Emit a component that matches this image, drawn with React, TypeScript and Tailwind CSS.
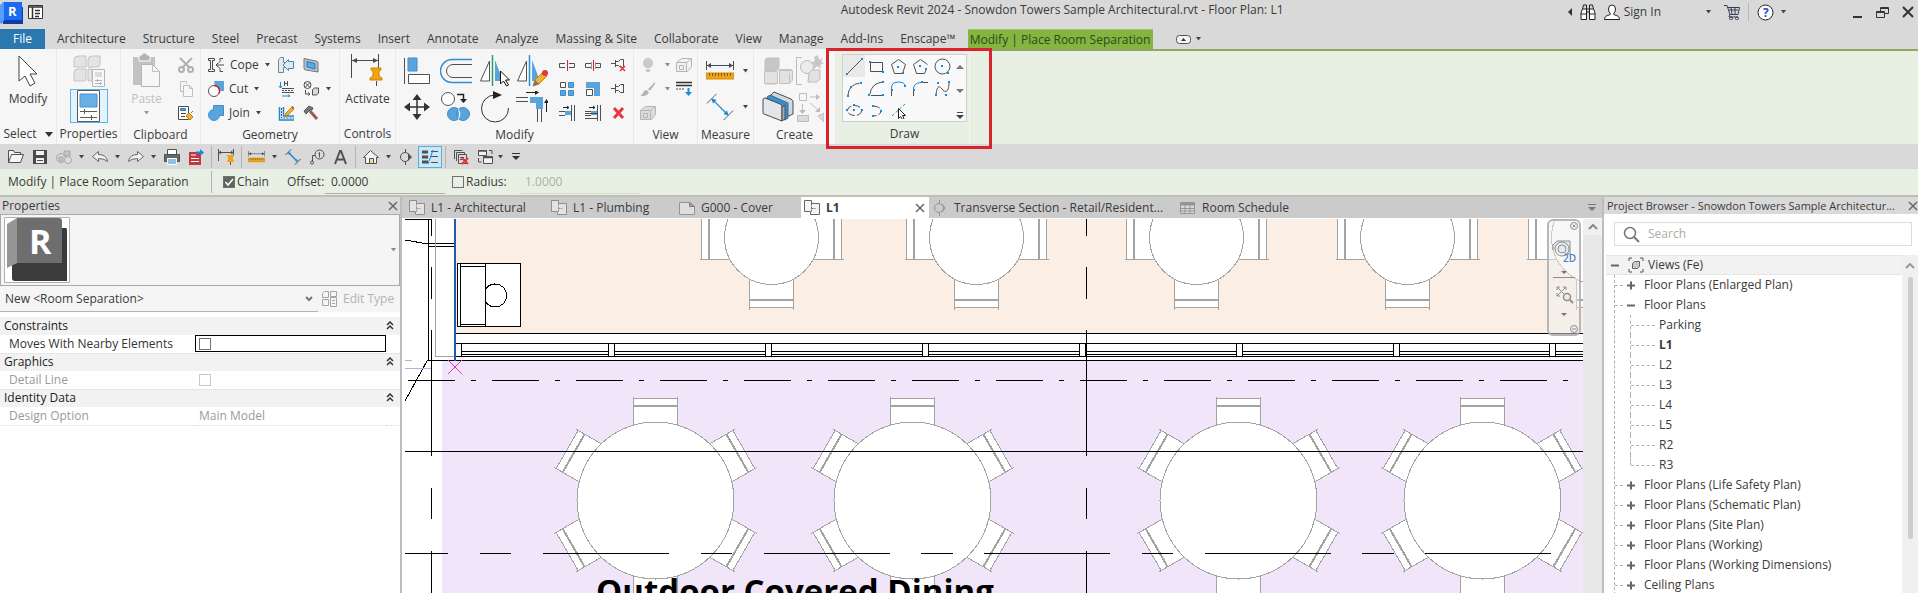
import type { ReactNode } from "react";

const BLUE = "#5aa4dc";

type IconProps = { w?: number; h?: number; stroke?: string; sw?: number; children: ReactNode };

function Icon({ w = 16, h = 16, stroke = "#505050", sw = 1, children }: IconProps) {
  return (
    <svg width={w} height={h} viewBox={`0 0 ${w} ${h}`} fill="none" stroke={stroke} strokeWidth={sw} className="block shrink-0" aria-hidden="true">
      {children}
    </svg>
  );
}

function Tool({ label, className = "", children }: { label: string; className?: string; children: ReactNode }) {
  return (
    <button type="button" aria-label={label} className={`flex items-center justify-center ${className}`}>
      {children}
    </button>
  );
}

function Caret({ color = "#444" }: { color?: string }) {
  return (
    <svg width="7" height="4" viewBox="0 0 7 4" className="block shrink-0" aria-hidden="true">
      <path d="M1 0h5L3.500 3.500z" fill={color} />
    </svg>
  );
}

function Panel({ title, className = "", children }: { title: ReactNode; className?: string; children: ReactNode }) {
  return (
    <section className={`flex shrink-0 flex-col border-r border-[#e9e9e9] ${className}`}>
      <div className="flex flex-1 justify-center pt-1">{children}</div>
      <div className="flex h-5 items-center justify-center gap-2 whitespace-nowrap">{title}</div>
    </section>
  );
}

/* ── Ribbon icons ── */

const ArrowIcon = () => (
  <Icon w={20} h={32} stroke="#444">
    <path d="M1 1v25l6-5 5 10 5-3-5-9h7z" fill="#fff" />
  </Icon>
);

const TypePropsIcon = () => (
  <Icon w={34} h={34} stroke="#c4c4c4">
    <path d="M2 6q0-4 4-4h8v11H2zM16 6q0-4 4-4h8v8q0 3-3 3h-9zM2 19q0-4 4-4h8v9q0 3-3 3H2zM16 15h4v12h-4z" fill="#e4e4e4" />
    <path d="M20.500 15.500h12v17h-12z" fill="#f8f8f8" stroke="#b4b4b4" />
    <path d="M23 18h7v5h-7z" fill="#dadada" stroke="none" />
    <path d="M23 26.500h7M23 29.500h7M25.500 25v3M28.500 28v3" stroke="#b4b4b4" />
  </Icon>
);

const PropsIcon = () => (
  <Icon w={26} h={32} stroke="#5a5a5a">
    <path d="M1.500 .5h22v31h-22z" fill="#fff" />
    <path d="M4 4h17v13H4z" fill="#69b0e6" stroke="#4793cb" />
    <path d="M4 21.500h17M4 27.500h17M8.500 19v5M15.500 25v5" />
  </Icon>
);

const PasteIcon = () => (
  <Icon w={27} h={34} stroke="#c0c0c0">
    <path d="M0 4h22v28H0z" fill="#c2c2c2" stroke="none" />
    <path d="M6 2h3V0h5v2h3v6H6z" fill="#b3b3b3" stroke="#fff" />
    <path d="M8.500 11.500h11l7 7v15h-18z" fill="#f7f7f7" stroke="#b5b5b5" />
    <path d="M19.500 11.500v7h7" />
  </Icon>
);

const ScissorsIcon = () => (
  <Icon stroke="#b0b0b0" sw={2}>
    <path d="M2 1l10 10M14 1L4 11" />
    <circle cx="3.500" cy="12.500" r="2.500" />
    <circle cx="12.500" cy="12.500" r="2.500" />
  </Icon>
);

const CopyIcon = () => (
  <Icon stroke="#c0c0c0">
    <path d="M2.500 .5h6v2M2.500 .5v10h3" />
    <path d="M5.500 4.500h6l3 3v8h-9z" fill="#f7f7f7" />
    <path d="M11.500 4.500v3h3" />
  </Icon>
);

const MatchIcon = () => (
  <Icon stroke="#4a4a4a">
    <path d="M.5 1.500h10v13H.5z" fill="#fff" />
    <path d="M2.500 3.500h5v2h-5z" fill={BLUE} stroke="#2b79b8" />
    <path d="M3 8.500h5M3 11.500h4" />
    <path d="M8 11l3-3 4 4-3 3z" fill="#f2b233" stroke="#b88214" />
    <path d="M13 8l2-2" stroke="#777" />
  </Icon>
);

const CopeIcon = () => (
  <Icon w={17} stroke="#4a4a4a">
    <path d="M.5 1.500h6v2h-2v9h2v2h-6v-2h2v-9h-2z" />
    <path d="M15 1.500h-3v3l-2 2M15 14.500h-3v-3l-2-2M16 8H8l2-2M8 8l2 2" />
  </Icon>
);

const CutIcon = () => (
  <Icon>
    <path d="M6 0h10v10H8z" fill={BLUE} stroke="none" />
    <circle cx="6" cy="10" r="5.500" fill="#fff" stroke="#555" />
    <path d="M6 4.500a5.500 5.500 0 0 1 5 8" stroke="#d8232a" strokeWidth="1.500" />
  </Icon>
);

const JoinIcon = () => (
  <Icon>
    <path d="M5.500 .5h10v10h-4a5.500 5.500 0 1 1-6-6z" fill={BLUE} stroke="#3f8dc9" />
  </Icon>
);

const CopeOutIcon = () => (
  <Icon>
    <path d="M.5 2.500l2-2h3v5H9v5H5.500v5h-5z" fill="#e4ebef" stroke="#6e8797" />
    <path d="M15.500 4.500h-5v-2L5 8l5.500 5.500v-2h5z" fill="#d6ebf8" stroke="#4c83a8" />
  </Icon>
);

const WallJoinIcon = () => (
  <Icon>
    <path d="M2.500 1v6M1 5l1.500 2L4 5M4 15h8M10 13.500l2 1.500-2 1.500" stroke="#1a8ad8" />
    <path d="M6.500 0v5M9.500 0v5M6 2.500h4" />
    <path d="M4 7.500h12M4 11.500h12" />
    <path d="M4 9.500h12" strokeDasharray="2 1" />
  </Icon>
);

const EditJoinIcon = () => (
  <Icon>
    <path d="M1.500 2v13H16M5.500 2v9H16" stroke="#1a8ad8" strokeWidth="1.500" />
    <path d="M3.500 3v10H16" strokeDasharray="2 1" />
    <path d="M8 8l6-6 2 2-6 6-3 1z" fill="#f2b233" stroke="#b88214" />
    <path d="M13 2l2-1 1 2-1 1z" fill="#d8443c" stroke="none" />
  </Icon>
);

const PanelFaceIcon = () => (
  <Icon>
    <path d="M1 1.500l12 2.500q2 0 2 2v9L3 13q-2 0-2-2z" fill="#b6c2ca" stroke="#6b7780" />
    <path d="M4 4.500l8 2v5.500l-8-2z" fill="#59a9e2" stroke="#2b79b8" />
  </Icon>
);

const CubeSwapIcon = () => (
  <Icon>
    <circle cx="4.500" cy="4" r="3.500" />
    <path d="M2 1.500l5 5M7 1.500l-5 5M2.500 9v4h4M5 11.500l2 1.500-2 1.500" />
    <path d="M9.500 8.500l2-1.500h4v5l-2 2h-4z" fill="#dadada" />
  </Icon>
);

const HammerIcon = () => (
  <Icon>
    <path d="M1 6l5-5 4 2-1 2-2 0-4 4z" fill="#777" stroke="#555" />
    <path d="M7 6l7 8" stroke="#9a5b55" strokeWidth="3" />
  </Icon>
);

const PinDimIcon = () => (
  <Icon w={34} h={34} stroke="#4a4a4a">
    <path d="M1.500 1v24M28.500 1v14M2 7.500h26" />
    <path d="M2 7.500l5-2.500v5zM28 7.500l-5-2.500v5z" fill="#4a4a4a" stroke="none" />
    <path d="M26.500 28v5" />
    <path d="M21 15h10v2l-2 1v5l3 2v2H20v-2l3-2v-5l-2-1z" fill="#f0a414" stroke="#c98506" />
  </Icon>
);

const AlignIcon = () => (
  <Icon w={32} h={32}>
    <path d="M3.500 3v26" />
    <path d="M7 3h9v13H7z" fill={BLUE} stroke="#3f8dc9" />
    <path d="M7.500 19.500h21v9h-21z" fill="#fff" />
  </Icon>
);

const OffsetIcon = () => (
  <Icon w={32} h={32}>
    <path d="M32 4.500H12a11.500 11.500 0 0 0 0 23h20" stroke="#2e8fd8" strokeWidth="1.500" />
    <path d="M32 9.500H13a6.500 6.500 0 0 0 0 13h19" />
  </Icon>
);

const MirrorPickIcon = () => (
  <Icon w={32} h={32}>
    <path d="M1.500 26h9V6z" fill="#fff" />
    <path d="M13.500 0v31" stroke="#2aa35a" strokeWidth="1.500" />
    <path d="M16 5v21h8z" fill={BLUE} stroke="none" />
    <path d="M21.500 16v13l3-3 3 5 2-1-3-5h4z" fill="#fff" stroke="#111" />
  </Icon>
);

const MirrorDrawIcon = () => (
  <Icon w={32} h={32}>
    <path d="M1.500 26h9V6z" fill="#fff" />
    <path d="M13.500 0v31" stroke="#2e8fd8" strokeWidth="1.500" />
    <path d="M16 5v21h8z" fill={BLUE} stroke="none" />
    <path d="M17 31l2-6 8-8 4 4-8 8z" fill="#f2b233" stroke="#c98506" />
    <path d="M17 31l2-6 4 4z" fill="#777" stroke="none" />
    <circle cx="29" cy="18" r="3" fill="#e2373c" stroke="none" />
  </Icon>
);

const MoveIcon = () => (
  <Icon w={32} h={32}>
    <path d="M16 5v22M5 16h22" stroke="#333" strokeWidth="1.500" />
    <path d="M16 3l4.500 6h-9zM16 29l4.500-6h-9zM3 16l6-4.500v9zM29 16l-6-4.500v9z" fill="#333" stroke="none" />
  </Icon>
);

const CopyShapesIcon = () => (
  <Icon w={32} h={32}>
    <circle cx="8" cy="8" r="6.500" fill="#fff" stroke="#555" />
    <path d="M17 3.500h6.500V11" stroke="#222" strokeWidth="1.500" />
    <path d="M20 8h7l-3.500 4z" fill="#222" stroke="none" />
    <circle cx="14" cy="23" r="6.500" fill={BLUE} stroke="#3f8dc9" />
    <circle cx="23" cy="23" r="6.500" fill={BLUE} stroke="#3f8dc9" />
    <path d="M18.500 18.500q3 4.500 0 9" stroke="#fff" />
  </Icon>
);

const RotateIcon = () => (
  <Icon w={32} h={32} stroke="#333">
    <path d="M19 4H16A13.500 13.500 0 1 0 29.500 17" />
    <path d="M14 0l9 4-9 4z" fill="#222" stroke="none" />
  </Icon>
);

const TrimIcon = () => (
  <Icon w={32} h={32}>
    <path d="M0 6.500h12M0 10.500h12M21.500 18v13M25.500 18v13" />
    <path d="M10 1.500h10M30.500 10v11" stroke="#222" />
    <path d="M19-1l4 2.500-4 2.500zM28 12l2.500-4 2.500 4z" fill="#222" stroke="none" />
    <path d="M14 6h13v12h-7v-6h-6z" fill={BLUE} stroke="none" />
  </Icon>
);

const SplitIcon = ({ gap = false }: { gap?: boolean }) => (
  <Icon>
    <path d="M6 6.500H.5v4H6M10 6.500h5.500v4H10" />
    {gap && <path d="M6.500 5v7M10.500 5v7" stroke="#999" />}
    <path d="M8.500 3v11" stroke="#d8232a" />
  </Icon>
);

const UnpinIcon = () => (
  <Icon>
    <path d="M0 6.500h4M4.500 3v7M4.500 4.500h3l2-2h3v8h-3l-2-2h-3" />
    <path d="M9 9l5 5M14 9l-5 5" stroke="#e8373c" strokeWidth="1.500" />
  </Icon>
);

const PinIcon = () => (
  <Icon>
    <path d="M0 7.500h4M4.500 3v9M4.500 5.500h3l2-2h3v8h-3l-2-2h-3M12.500 3v9" />
  </Icon>
);

const ArrayIcon = () => (
  <Icon>
    <path d="M1.500 1.500h5v5h-5z" fill="#fff" />
    <path d="M9.500 1.500h5v5h-5zM1.500 9.500h5v5h-5zM9.500 9.500h5v5h-5z" fill={BLUE} stroke="#3f8dc9" />
  </Icon>
);

const ScaleIcon = () => (
  <Icon>
    <path d="M1 1h14v14H9V7H1z" fill={BLUE} stroke="none" />
    <path d="M1.500 8.500h6v6h-6z" fill="#fff" />
  </Icon>
);

const TrimOneIcon = ({ many = false }: { many?: boolean }) => (
  <Icon>
    <path d="M12.500 0v16M15.500 0v16M0 6.500h6M0 10.500h6" />
    <path d="M4 2.500h5M8 1l2 1.500L8 4" stroke="#222" />
    <path d="M6 6h6v4H6z" fill={BLUE} stroke="none" />
    {many && <path d="M0 13.500h12M0 8.500h12" />}
  </Icon>
);

const DeleteIcon = () => (
  <Icon stroke="#e8373c" sw={3}>
    <path d="M3 3l9 10M12 3L3 13" />
  </Icon>
);

const BulbIcon = () => (
  <Icon stroke="none">
    <path d="M8 1a5 5 0 0 0-3 9v1h6v-1a5 5 0 0 0-3-9zM6 12h4v3H6z" fill="#c9c9c9" />
  </Icon>
);

const BrushIcon = () => (
  <Icon stroke="none">
    <path d="M15 1L8 8l2 2 5-7zM7 9q-3 0-4 3-1 2-3 2 5 3 9-2z" fill="#b5b5b5" />
  </Icon>
);

const BoxIcon = ({ fill = "#dcdcdc" }: { fill?: string }) => (
  <Icon stroke="#b5b5b5">
    <path d="M.5 5.500l5-4h10v8l-4 5H.5z" fill={fill} />
    <path d="M.5 5.500h10v9M10.500 5.500l5-4M3.500 8.500h4v4h-4z" fill="none" />
  </Icon>
);

const LinesDownIcon = () => (
  <Icon>
    <path d="M0 1.500h16M0 4.500h16" stroke="#333" strokeWidth="1.500" />
    <path d="M0 8h9" strokeDasharray="2 1" />
    <path d="M12.500 7v5" stroke="#1a8ad8" strokeWidth="2" />
    <path d="M9 11h7l-3.500 4z" fill="#1a8ad8" stroke="none" />
  </Icon>
);

const RulerIcon = ({ w = 28, h = 20 }: { w?: number; h?: number }) => (
  <svg width={w} height={h} viewBox="0 0 28 20" fill="none" stroke="#4a4a4a" className="block shrink-0" aria-hidden="true">
    <path d="M.5 0v9M27.500 0v9M1 4.500h26" />
    <path d="M1 4.500l4-2.500v5zM27 4.500l-4-2.500v5z" fill="#4a4a4a" stroke="none" />
    <path d="M0 12h28v6H0z" fill="#f0a414" stroke="#d08c08" />
    <path d="M3.500 12v3M6.500 12v3M9.500 12v3M12.500 12v3M15.500 12v3M18.500 12v3M21.500 12v3M24.500 12v3" stroke="#8a5d00" />
  </svg>
);

const AlignedDimIcon = ({ s = 32 }: { s?: number }) => (
  <svg width={s} height={s} viewBox="0 0 32 32" fill="none" stroke="#4a4a4a" strokeWidth={s < 20 ? 2 : 1} className="block shrink-0" aria-hidden="true">
    <path d="M1 12L12 1M20 31l11-11" />
    <path d="M7 7l17 17" stroke="#1a8ad8" strokeWidth={s < 20 ? 3 : 1.5} />
    <path d="M6 6l6 2-4 4zM26 26l-6-2 4-4z" fill="#1a8ad8" stroke="none" />
  </svg>
);

const CubesIcon = () => (
  <Icon w={30} h={30} stroke="#c2c2c2">
    <path d="M2 5q0-3 3-3h11v9q0 3-3 3v14H2z" fill="#c6c6c6" />
    <path d="M1.500 15.500h13v12h-13zM16.500 14.500h13v10l-3 3h-10z" fill="#e2e2e2" />
    <path d="M14.500 15.500l2-2h12M26.500 17.500v10" />
  </Icon>
);

const GroupIcon = () => (
  <Icon w={28} h={32} stroke="#bcbcbc">
    <path d="M6 2.500H.5v27H6" />
    <circle cx="11" cy="12" r="6.500" fill="#ececec" />
    <path d="M13 18l3-3h8v9l-3 3h-9z" fill="#e2e2e2" />
    <path d="M22 0l1 5 4-2-2 4 3 1-4 2 1 4-4-3-3 3v-5l-4-1 5-2-1-4z" fill="#c6c6c6" stroke="none" />
  </Icon>
);

const WallsIcon = () => (
  <Icon w={32} h={32} stroke="#4a4a4a">
    <path d="M9 4l3-3 17 7q2 1 2 3v12l-4 2L9 17z" fill="#d4d8da" />
    <path d="M5 6l3-2 18 8v15l-3 2L5 20z" fill="#3d8dcc" stroke="#2b6d9f" />
    <path d="M1 9q0-2 2-2l15 6q2 1 2 3v14L2 23q-1 0-1-2z" fill="#e3e6e8" />
    <path d="M20 16l3-2v14l-3 2z" fill="#a6adb1" />
  </Icon>
);

const SimilarIcon = () => (
  <Icon w={28} h={32} stroke="#bcbcbc">
    <path d="M3.500 2.500h7v7h-7zM14 6h8M6.500 13v8M14 12l8 7" />
    <path d="M20 3l4 3-4 3zM3 19l3.500 4 3.500-4zM24 16v5h-5z" fill="#bcbcbc" stroke="none" />
    <path d="M1.500 24.500h11v6h-11zM22 25l6-3v9z" fill="#dadada" />
  </Icon>
);

/* ── Draw gallery ── */

function Dots({ at }: { at: [number, number][] }) {
  return (
    <>
      {at.map(([x, y]) => (
        <rect key={`${x}-${y}`} x={x - 1} y={y - 1} width="2" height="2" fill="#1a8ad8" stroke="none" />
      ))}
    </>
  );
}

const drawTools: { label: string; art: ReactNode }[] = [
  { label: "Line", art: <><path d="M2 15L15 2" /><Dots at={[[1, 16], [16, 1]]} /></> },
  { label: "Rectangle", art: <><path d="M2.500 4.500h12v9h-12z" /><Dots at={[[2, 4], [15, 14]]} /></> },
  { label: "Inscribed Polygon", art: <><path d="M8.500 1.500l7 5-3 9h-8l-3-9z" /><Dots at={[[8, 9], [13, 15]]} /></> },
  { label: "Circumscribed Polygon", art: <><path d="M14 12l-1.500 3.500h-8l-3-9 7-5 7 5" /><Dots at={[[8, 8], [14, 11]]} /></> },
  { label: "Circle", art: <><circle cx="8.500" cy="8.500" r="7.500" /><Dots at={[[8, 8], [14, 15]]} /></> },
  { label: "Start-End-Radius Arc", art: <><path d="M2 15Q3 4 15 3" strokeDasharray="8 2" /><Dots at={[[2, 16], [5, 7], [15, 3]]} /></> },
  { label: "Center-ends Arc", art: <><path d="M2 14Q3 4 14 2M3 15.500h11" /><Dots at={[[1, 15], [15, 2], [15, 15]]} /></> },
  { label: "Tangent End Arc", art: <><path d="M1.500 10v6" /><path d="M1.500 9Q1 2 8 2t7 4" stroke="#1a8ad8" /><Dots at={[[2, 10], [15, 6]]} /></> },
  { label: "Fillet Arc", art: <><path d="M1.500 11v5M10 2.500h6" /><path d="M1.500 10Q1 3 9 2.500" stroke="#1a8ad8" /><Dots at={[[2, 10], [10, 2]]} /></> },
  { label: "Spline", art: <><path d="M2 15C3 6 5 5 8 9s7 4 7-7" /><Dots at={[[2, 15], [4, 3], [12, 15], [15, 2]]} /></> },
  { label: "Ellipse", art: <><ellipse cx="8.500" cy="8.500" rx="7" ry="5" strokeDasharray="7 2" /><Dots at={[[8, 8], [1, 8], [16, 8], [8, 3]]} /></> },
  { label: "Partial Ellipse", art: <><path d="M6 4q7 1 7 5t-7 5" strokeDasharray="6 2" /><Dots at={[[5, 4], [13, 9], [5, 14]]} /></> },
  {
    label: "Pick Lines",
    art: <><path d="M2 14L15 2" stroke="#2aa35a" strokeDasharray="3 2" /><path d="M8.500 6.500v10l2-2 2 3 1.500-1-1.500-3h3z" fill="#fff" stroke="#222" /></>,
  },
];

/* ── Floor plan ── */

function Chair({ reach }: { reach: number }) {
  return (
    <g>
      <path d={`M-22 -${reach - 30}V-${reach - 8}h44v22z`} />
      <path d={`M-22 -${reach - 7}h44v-7h-44zM-22 -${reach}v-2M22 -${reach}v-2`} />
    </g>
  );
}

function DiningTable({ cx, cy, r, reach, angles }: { cx: number; cy: number; r: number; reach: number; angles: number[] }) {
  return (
    <g transform={`translate(${cx} ${cy})`} fill="#fff" stroke="#a3a3a3">
      {angles.map((a) => (
        <g key={a} transform={`rotate(${a})`}>
          <Chair reach={reach} />
        </g>
      ))}
      <circle r={r} />
    </g>
  );
}

const mullions = [455, 608, 765, 922, 1079, 1236, 1393, 1549];
const beamDashes = [[405, 448], [480, 511], [543, 669], [701, 732], [764, 890], [921, 953], [984, 1110], [1142, 1173], [1205, 1331], [1362, 1394], [1425, 1551]];

function FloorPlan() {
  return (
    <svg className="block h-full w-full" role="img" aria-label="Floor plan L1">
      <g transform="translate(-404 -219)" fill="none" stroke="#000" strokeWidth="1" shapeRendering="crispEdges">
        <rect x="455" y="219" width="2400" height="114" fill="#fbefe5" stroke="none" />
        <rect x="442" y="361" width="2400" height="1200" fill="#f1e6f9" stroke="none" />

        {[771.5, 976.5, 1196.5, 1407.5, 1598.5].map((x) => (
          <DiningTable key={x} cx={x} cy={237.5} r={47} reach={70} angles={[90, 180, 270]} />
        ))}
        {[655.5, 912.5, 1238.5, 1482.5].map((x) => (
          <DiningTable key={x} cx={x} cy={500.5} r={78.5} reach={102} angles={[0, 60, 120, 180, 240, 300]} />
        ))}

        {/* curtain wall */}
        <rect x="455" y="334" width="2400" height="26" fill="#fff" stroke="none" />
        <path d="M455 333.500H2800M455 343.500H2800M455 351.500H2800M455 354.500H2800M455 356.500H2800M427 360.500H2800" />
        {mullions.map((x) => (
          <rect key={x} x={x + 0.5} y="343.500" width="6" height="13" fill="#fff" />
        ))}

        {/* left wall */}
        <path d="M405 219.500h26M428.500 219v142M405 240l23 4M428 243.500h26M428 246.500h26M427 361l-22 40" />
        <path d="M435.500 219v137.500h19" stroke="#a3a3a3" />
        <path d="M455 219v142" stroke="#1d5cae" strokeWidth="2" />
        <path d="M405 360.500h7M405 368h26" stroke="#a9b7dc" />
        {[431.5, 1086.5].map((x) => (
          <path key={x} d={`M${x} 219v17M${x} 267v32M${x} 330v126M${x} 488v31M${x} 551v200`} />
        ))}

        {/* washroom fixture */}
        <path d="M457.500 263.500h63v63h-63zM460.500 266.500h25v58h-25zM460.500 263.500v63M485.500 263.500v63" fill="#fff" />
        <path d="M486 288.500a11.500 11.500 0 1 1 0 14" />

        <path d="M408 380.500H1570" strokeDasharray="47 16 5 16" />
        <path d="M405 451.500H2800" />
        {beamDashes.map(([a, b]) => (
          <path key={a} d={`M${a} 553.500H${b}`} />
        ))}
        <path d="M448 360l14 14M462 360l-14 14" stroke="#e02fc8" shapeRendering="auto" />
        <text x="596" y="603" fill="#000" stroke="none" className="font-['Open_Sans',sans-serif] text-[33px] font-bold">Outdoor Covered Dining</text>
      </g>
    </svg>
  );
}

function NavBar() {
  return (
    <div className="absolute top-0 right-[2px] flex h-[117px] w-[34px] flex-col rounded-md border-2 border-[#a8a8a8]/80 bg-[#efefef]/50">
      <svg width="30" height="113" viewBox="0 0 30 113" fill="none" stroke="#8d8d8d" role="img" aria-label="Navigation bar">
        <circle cx="25" cy="5" r="3.500" />
        <path d="M23.500 3.500l3 3M26.500 3.500l-3 3M4 56.500h22M23 108h4" />
        <path d="M4 29v-5l4-4h13v13h-5" fill="#e4eaee" />
        <circle cx="13" cy="28" r="7" />
        <circle cx="13" cy="28" r="4" />
        <path d="M12 50h6l-3 3zM12 92h6l-3 3z" fill="#777" stroke="none" />
        <path d="M8 66l9 9M17 66l-9 9M8 69v-3h3M14 66h3v3M8 72v3h3" />
        <circle cx="18" cy="76" r="3.500" fill="#eee" strokeWidth="1.500" />
        <path d="M21 79l3 3" strokeWidth="2" />
        <circle cx="25" cy="108" r="3.500" />
        <text x="14" y="41" fill="#4a7fc4" stroke="none" className="font-['Open_Sans',sans-serif] text-[10px] font-semibold">2D</text>
      </svg>
    </div>
  );
}

/* ── Chrome ── */

const ribbonTabs = ["Architecture", "Structure", "Steel", "Precast", "Systems", "Insert", "Annotate", "Analyze", "Massing & Site", "Collaborate", "View", "Manage", "Add-Ins", "Enscape™"];

function TitleBar() {
  return (
    <header className="flex h-[29px] shrink-0 items-start">
      <div className="flex min-w-0 flex-[4] items-start gap-1">
        <svg width="24" height="24" viewBox="0 0 24 24" className="mt-[1px] block" role="img" aria-label="Revit">
          <path d="M3 6h20v17H3z" fill="#0c3f9e" />
          <path d="M2 2l2-1h18v18H5l-4 4z" fill="#1a6bf0" />
          <path d="M0 4l4-3v18l-4 4z" fill="#5b9bff" />
          <text x="8" y="15" fill="#fff" className="font-['Open_Sans',sans-serif] text-[13px] font-bold">R</text>
        </svg>
        <Tool label="Quick menu" className="mt-[5px]">
          <Icon w={15} h={14} stroke="#333">
            <path d="M.5.500h14v13H.5z" fill="#fff" />
            <path d="M0 2h15M4.500 2v12M7 5.500h5M7 8.500h5M7 11.500h4" strokeWidth="1.500" />
          </Icon>
        </Tool>
      </div>
      <h1 className="mt-[2px] leading-4 whitespace-nowrap">Autodesk Revit 2024 - Snowdon Towers Sample Architectural.rvt - Floor Plan: L1</h1>
      <div className="flex h-6 min-w-0 flex-[3] items-center justify-end pr-1">
        <svg width="4" height="8" viewBox="0 0 4 8" className="mr-2" aria-hidden="true"><path d="M4 0v8L0 4z" fill="#333" /></svg>
        <Tool label="Find" className="mr-2">
          <Icon stroke="#222">
            <path d="M2.500 5l1-4h3v4M9.500 5V1h3l1 4M6.500 5h3M6.500 8h3" />
            <path d="M1 15.500V9l1.500-4h4v10.500zM9.500 15.500V5h4L15 9v6.500zM1 10h5M10 10h5" fill="#fff" />
          </Icon>
        </Tool>
        <button type="button" className="mr-11 flex items-center gap-1 whitespace-nowrap">
          <Icon stroke="#222">
            <path d="M.5 15.500q0-4 5-4.500l1-1q-2-2-2-5 0-4 3.500-4t3.500 4q0 3-2 5l1 1q5 .5 5 4.500z" fill="#fff" />
          </Icon>
          Sign In
        </button>
        <Caret />
        <Tool label="Autodesk App Store" className="ml-3">
          <Icon stroke="#333e55">
            <path d="M0 1.500h3l3 9h8l1.500-7h-12M7 13h7M6 10l-1 3h3" />
            <path d="M5 6h9M7 4l1 6M11 4v6" />
            <circle cx="7" cy="14.500" r="1.500" />
            <circle cx="13" cy="14.500" r="1.500" />
          </Icon>
        </Tool>
        <span className="mx-2 h-[18px] w-px bg-[#b9b9b9]" />
        <Tool label="Help" className="mr-[6px]">
          <Icon w={17} h={17} stroke="#222">
            <circle cx="8.500" cy="8.500" r="7.500" fill="#fff" />
            <text x="6" y="13" fill="#1c4fc4" stroke="none" className="font-['Open_Sans',sans-serif] text-[12px] font-bold">?</text>
          </Icon>
        </Tool>
        <Caret />
        <Tool label="Minimize" className="ml-[66px]"><Icon w={9} h={12} stroke="#333" sw={2}><path d="M0 11h9" /></Icon></Tool>
        <Tool label="Restore" className="ml-[14px]"><Icon w={13} h={13} stroke="#333"><path d="M4.500 5V1.500h8v6H9M.5 5.500h8v6h-8zM4 2.500h9M0 6.500h9" /></Icon></Tool>
        <Tool label="Close" className="ml-[13px]"><Icon w={12} h={12} stroke="#333" sw={2}><path d="M1 1l10 10M11 1L1 11" /></Icon></Tool>
      </div>
    </header>
  );
}

function TabStrip() {
  return (
    <nav className="flex h-5 shrink-0 items-stretch whitespace-nowrap">
      <button type="button" className="w-[45px] bg-[#2b78b0] text-white">File</button>
      <div className="flex items-stretch gap-[17px] px-3">
        {ribbonTabs.map((t) => (
          <button key={t} type="button">{t}</button>
        ))}
      </div>
      <button type="button" className="w-[185px] border-t border-[#9cc460] bg-[#85b440] text-[#2c4a1c]">Modify | Place Room Separation</button>
      <button type="button" aria-label="Minimize ribbon" className="ml-[23px] flex items-center gap-1">
        <Icon w={15} h={9}><rect x=".5" y=".5" width="14" height="8" rx="3" fill="#f5f5f5" /><path d="M5 6h5L7.500 3z" fill="#333" stroke="none" /></Icon>
        <Caret />
      </button>
    </nav>
  );
}

function CaretTool({ label, icon, color }: { label: string; icon: ReactNode; color?: string }) {
  return (
    <button type="button" aria-label={label} className="flex items-center gap-2">
      {icon}
      <Caret color={color} />
    </button>
  );
}

function Ribbon() {
  return (
    <div className="relative flex h-[95px] shrink-0 bg-[#e8f0e4]">
      <div className="flex bg-[#f6f6f6]">
        <Panel className="w-[57px]" title={<>Select <svg width="8" height="5" aria-hidden="true"><path d="M0 0h8L4 5z" fill="#333" /></svg></>}>
          <button type="button" className="flex flex-col items-center gap-1 self-start pt-[2px] leading-4"><ArrowIcon />Modify</button>
        </Panel>
        <Panel className="w-16" title="Properties">
          <div className="flex flex-col items-center">
            <Tool label="Type Properties" className="h-9"><TypePropsIcon /></Tool>
            <Tool label="Properties" className="h-[34px] w-[38px] border border-[#5bb5e6] bg-[#e4f2fb]"><PropsIcon /></Tool>
          </div>
        </Panel>
        <Panel className="w-20" title="Clipboard">
          <div className="flex gap-4 pl-1">
            <button type="button" className="flex flex-col items-center self-start leading-4 text-[#c0c0c0]">
              <PasteIcon />
              <span className="mt-1 mb-1">Paste</span>
              <Caret color="#999" />
            </button>
            <div className="grid grid-rows-[24px_24px_24px] items-center">
              <Tool label="Cut to clipboard"><ScissorsIcon /></Tool>
              <Tool label="Copy to clipboard"><CopyIcon /></Tool>
              <Tool label="Match type"><MatchIcon /></Tool>
            </div>
          </div>
        </Panel>
        <Panel className="w-[139px]" title="Geometry">
          <div className="flex flex-1 justify-between pr-2 pl-[7px]">
            <div className="grid grid-rows-[24px_24px_24px] items-center">
              <button type="button" className="flex items-center gap-[5px]"><CopeIcon />Cope<Caret /></button>
              <button type="button" className="flex items-center gap-[5px]"><CutIcon />Cut<Caret /></button>
              <button type="button" className="flex items-center gap-[5px]"><JoinIcon />Join<Caret /></button>
            </div>
            <div className="flex gap-[9px]">
              <div className="grid grid-rows-[24px_24px_24px] items-center">
                <Tool label="Cut profile"><CopeOutIcon /></Tool>
                <Tool label="Wall joins"><WallJoinIcon /></Tool>
                <Tool label="Edit joins"><EditJoinIcon /></Tool>
              </div>
              <div className="grid w-[28px] grid-rows-[24px_24px_24px] items-center justify-items-start">
                <Tool label="Split face"><PanelFaceIcon /></Tool>
                <button type="button" aria-label="Unjoin" className="flex items-center gap-[6px]"><CubeSwapIcon /><Caret /></button>
                <Tool label="Demolish"><HammerIcon /></Tool>
              </div>
            </div>
          </div>
        </Panel>
        <Panel className="w-[56px]" title="Controls">
          <button type="button" className="flex flex-col items-center gap-1 self-start leading-4"><PinDimIcon />Activate</button>
        </Panel>
        <Panel className="w-[238px]" title="Modify">
          <div className="grid grid-cols-[39px_39px_39px_36px] grid-rows-[36px_36px] items-center">
            <Tool label="Align"><AlignIcon /></Tool>
            <Tool label="Offset"><OffsetIcon /></Tool>
            <Tool label="Mirror - Pick Axis"><MirrorPickIcon /></Tool>
            <Tool label="Mirror - Draw Axis"><MirrorDrawIcon /></Tool>
            <Tool label="Move"><MoveIcon /></Tool>
            <Tool label="Copy"><CopyShapesIcon /></Tool>
            <Tool label="Rotate"><RotateIcon /></Tool>
            <Tool label="Trim/Extend to Corner"><TrimIcon /></Tool>
          </div>
          <div className="ml-1 grid grid-cols-[26px_26px_26px] grid-rows-[24px_24px_24px] items-center">
            <Tool label="Split Element"><SplitIcon /></Tool>
            <Tool label="Split with Gap"><SplitIcon gap /></Tool>
            <Tool label="Unpin"><UnpinIcon /></Tool>
            <Tool label="Array"><ArrayIcon /></Tool>
            <Tool label="Scale"><ScaleIcon /></Tool>
            <Tool label="Pin"><PinIcon /></Tool>
            <Tool label="Trim Single"><TrimOneIcon /></Tool>
            <Tool label="Trim Multiple"><TrimOneIcon many /></Tool>
            <Tool label="Delete"><DeleteIcon /></Tool>
          </div>
        </Panel>
        <Panel className="w-16" title="View">
          <div className="grid grid-cols-[36px_16px] grid-rows-[24px_24px_24px] items-center">
            <CaretTool label="Hide" icon={<BulbIcon />} color="#888" />
            <Tool label="Displace"><BoxIcon fill="#f2f2f2" /></Tool>
            <CaretTool label="Override" icon={<BrushIcon />} color="#888" />
            <Tool label="Linework"><LinesDownIcon /></Tool>
            <Tool label="Selection Box" className="w-4"><BoxIcon /></Tool>
          </div>
        </Panel>
        <Panel className="w-[56px]" title="Measure">
          <div className="grid grid-rows-[36px_36px] items-center pl-1">
            <CaretTool label="Measure" icon={<RulerIcon />} />
            <CaretTool label="Aligned Dimension" icon={<AlignedDimIcon s={28} />} />
          </div>
        </Panel>
        <Panel className="w-[82px]" title="Create">
          <div className="mr-auto grid grid-cols-[37px_28px] grid-rows-[36px_36px] items-center pl-[5px]">
            <Tool label="Create Parts"><CubesIcon /></Tool>
            <Tool label="Create Group"><GroupIcon /></Tool>
            <Tool label="Create Assembly"><WallsIcon /></Tool>
            <Tool label="Create Similar"><SimilarIcon /></Tool>
          </div>
        </Panel>
      </div>
      <section className="ml-1 flex w-[130px] flex-col border-r border-[#f4f8f0]">
        <div className="mt-[5px] mr-[2px] ml-[2px] flex h-[68px] border border-[#cfcfcf] bg-[#f9f9f9]">
          <div className="grid grid-cols-[22px_22px_22px_22px_22px] grid-rows-[22px_22px_22px]">
            {drawTools.map((d, i) => (
              <button key={d.label} type="button" aria-label={d.label} className={`flex items-center justify-center ${i === 0 ? "bg-[#e9e9e9]" : ""}`}>
                <Icon w={17} h={17}>{d.art}</Icon>
              </button>
            ))}
          </div>
          <div className="flex flex-1 flex-col items-center justify-between pt-[10px] pb-[2px]">
            <Icon w={8} h={4} stroke="none"><path d="M0 4h8L4 0z" fill="#777" /></Icon>
            <Icon w={8} h={4} stroke="none"><path d="M0 0h8L4 4z" fill="#777" /></Icon>
            <Icon w={8} h={7} stroke="none"><path d="M1 0h6v1H1zM0 3h8L4 7z" fill="#444" /></Icon>
          </div>
        </div>
        <div className="mt-[2px] flex h-5 items-center justify-center">Draw</div>
      </section>
      <div className="flex-1 border-t-2 border-[#93a761]" />
      <div className="pointer-events-none absolute -top-[1px] left-[826px] h-[101px] w-[166px] border-3 border-[#d8232a]" />
    </div>
  );
}

const Sep = ({ className = "" }: { className?: string }) => <span className={`h-[22px] w-px bg-[#b4b4b4] ${className}`} />;

function QuickAccess() {
  return (
    <div className="flex h-[25px] shrink-0 items-center pl-2">
      <Tool label="Open"><Icon><path d="M.5 13.500v-12h5l1 2h6v2M.5 13.500l3-8h12l-3 8z" fill="#f5f5f5" /></Icon></Tool>
      <Tool label="Save" className="ml-2"><Icon><path d="M1 1h14v14H1z" fill="#4a4a4a" stroke="none" /><path d="M4 2h8v4H4zM4 9h8v5H4z" fill="#f2f2f2" stroke="none" /><path d="M5 11.500h6" /></Icon></Tool>
      <Tool label="Synchronize" className="mr-[6px] ml-2"><Icon stroke="#a8a8a8"><circle cx="5" cy="9" r="4.500" /><path d="M8 2h6v5H8zM3 8h4v4H3z" fill="#c4c4c4" /><circle cx="12" cy="11" r="3.500" fill="#ddd" /></Icon></Tool>
      <Caret />
      <Tool label="Undo" className="mr-[6px] ml-[7px]"><Icon stroke="#666"><path d="M.5 7.500l6-5v3q8 0 9 7-3-3-9-3v3z" fill="#f2f2f2" /></Icon></Tool>
      <Caret />
      <Tool label="Redo" className="mr-[6px] ml-[7px]"><Icon stroke="#666"><path d="M15.500 7.500l-6-5v3q-8 0-9 7 3-3 9-3v3z" fill="#f2f2f2" /></Icon></Tool>
      <Caret />
      <Tool label="Print" className="ml-[7px]"><Icon><path d="M3.500 .5h9v5h-9z" fill="#fff" /><path d="M.5 5.500h15v7H.5z" fill="#666" /><path d="M3.500 9.500h9v6h-9z" fill="#8fc1e6" stroke="#fff" /></Icon></Tool>
      <Tool label="Export PDF" className="ml-2"><Icon><path d="M1 3h12v13H1z" fill="#c0393f" stroke="none" /><path d="M3 6h5M3 9.500h8M3 12.500h8" stroke="#fff" /><path d="M8 3.500h6" stroke="#1a8ad8" strokeWidth="2" /><path d="M12 0l4 3.500L12 7z" fill="#1a8ad8" stroke="none" /></Icon></Tool>
      <Sep className="mr-[6px] ml-[7px]" />
      <Tool label="Activate Controls"><Icon w={17}><path d="M.5 0v12M15.500 0v6M1 3.500h14M3 2L1 3.500 3 5M13 2l2 1.500L13 5M12.500 13v3" /><path d="M9 6h7v1l-1 1v3l1 1v1H9v-1l1-1V8L9 7z" fill="#f0a414" stroke="none" /></Icon></Tool>
      <Sep className="mr-[6px] ml-[6px]" />
      <Tool label="Measure" className="mr-[6px]"><RulerIcon w={17} h={12} /></Tool>
      <Caret />
      <Tool label="Aligned Dimension" className="ml-[7px]"><AlignedDimIcon s={16} /></Tool>
      <Tool label="Tag" className="ml-2"><Icon><circle cx="10.500" cy="5.500" r="4.500" /><path d="M9.500 4.500l1-1v5M6 6.500H3.500v6" /><circle cx="3" cy="13.500" r="1.500" /></Icon></Tool>
      <Tool label="Text" className="ml-2"><Icon stroke="#505050" sw={2}><path d="M2 15L7 2h1l5 13M4 10.500h7" /></Icon></Tool>
      <Sep className="mr-[7px] ml-[6px]" />
      <Tool label="Default 3D View" className="mr-[6px]"><Icon><path d="M.5 8.500l7-7 8 7h-2v6h-11v-6z" fill="#f2f2f2" /><path d="M6.500 9.500h4v5h-4z" fill="#f7dd9c" /></Icon></Tool>
      <Caret />
      <Tool label="Section" className="ml-[6px]"><Icon><circle cx="7" cy="8" r="4.500" /><path d="M7.500 0v3M7.500 13v3" /><path d="M10 4l4 4-4 4z" fill="#505050" stroke="none" /></Icon></Tool>
      <Tool label="Thin Lines" className="ml-1 h-[22px] w-6 border border-[#4fb0e4] bg-[#cde6f5]"><Icon><path d="M0 3h6M0 8h6M0 13h6" strokeWidth="3" /><path d="M9 2.500h7M9 7.500h7M9 13.500h7" /><path d="M11 1L6 15" stroke="#1a8ad8" /></Icon></Tool>
      <Sep className="mr-[7px] ml-[3px]" />
      <Tool label="Close Inactive Views" className="mr-2"><Icon><path d="M1.500 10V1.500h8M3.500 12V3.500h8V6M5.500 5.500h8v9h-8zM7 8.500h4M7 10.500h3" /><path d="M9 9l6 6M15 9l-6 6" stroke="#e8373c" strokeWidth="2" /></Icon></Tool>
      <Tool label="Switch Windows" className="mr-1"><Icon><path d="M1.500 1.500h8v5h-8zM6.500 7.500h9v7h-9z" fill="#f2f2f2" /><path d="M1 2h9M6 8.500h10" strokeWidth="1.500" /><path d="M12 1.500h3V5M1.500 9v4h3" /></Icon></Tool>
      <Caret />
      <Tool label="Customize" className="ml-2"><Icon w={8} h={7} stroke="none"><path d="M0 0h8v1H0zM0 3h8L4 7z" fill="#333" /></Icon></Tool>
    </div>
  );
}

function Check({ checked = false, disabled = false, id }: { checked?: boolean; disabled?: boolean; id: string }) {
  return (
    <span className="grid size-3 shrink-0">
      <input
        id={id}
        type="checkbox"
        defaultChecked={checked}
        disabled={disabled}
        className="col-start-1 row-start-1 size-3 appearance-none border border-[#707070] bg-transparent checked:bg-[#5f6660] disabled:border-[#c8c8c8]"
      />
      {checked && (
        <svg viewBox="0 0 12 12" className="pointer-events-none col-start-1 row-start-1" aria-hidden="true"><path d="M2.500 6l2.500 3 5-6" fill="none" stroke="#fff" strokeWidth="1.500" /></svg>
      )}
    </span>
  );
}

function OptionsBar() {
  return (
    <div className="flex h-[28px] shrink-0 items-center border-b-2 border-[#bdbfbc] bg-[#e8f0e4] pl-2">
      <span className="w-[203px]">Modify | Place Room Separation</span>
      <Sep className="mr-[11px]" />
      <label htmlFor="chain" className="flex w-16 items-center gap-[2px]"><Check id="chain" checked />Chain</label>
      <label htmlFor="offset" className="w-[38px]">Offset:</label>
      <input id="offset" defaultValue="0.0000" className="h-6 w-[120px] border-b border-[#a9b0a0] bg-transparent px-[6px] outline-none" />
      <label htmlFor="radius-on" className="ml-[7px] flex w-[67px] items-center gap-[2px]"><Check id="radius-on" />Radius:</label>
      <input aria-label="Radius" disabled defaultValue="1.0000" className="h-6 w-[120px] border-b border-[#d5dccb] bg-transparent px-[6px] text-[#aab0a4]" />
    </div>
  );
}

/* ── Properties palette ── */

const properties = [
  { group: "Constraints", name: "Moves With Nearby Elements", kind: "active" },
  { group: "Graphics", name: "Detail Line", kind: "check" },
  { group: "Identity Data", name: "Design Option", kind: "text" },
];

function PropertiesPalette() {
  return (
    <aside className="flex w-[400px] shrink-0 flex-col bg-white">
      <div className="flex h-[17px] items-center justify-between bg-[#d9d9d9] pr-[2px] pl-[2px]">
        <h2>Properties</h2>
        <Tool label="Close Properties"><Icon w={10} h={10} stroke="#666" sw={1.5}><path d="M1 1l8 8M9 1L1 9" /></Icon></Tool>
      </div>
      <div className="flex h-[72px] shrink-0 items-center justify-between border border-[#a9a9a9] bg-[#f5f5f5] pr-[2px] pl-[3px]">
        <svg width="66" height="66" viewBox="0 0 66 66" role="img" aria-label="Revit family">
          <path d="M.5 .5h65v65H.5z" fill="#fff" stroke="#b0b0b0" />
          <path d="M8 46h50V11h4q1 0 1 2v51H11q-3 0-3-3z" fill="#3b3b3b" />
          <path d="M3 7l10-6v45L3 51z" fill="#959595" />
          <path d="M13 1h42q3 0 3 3v42H13z" fill="#6e6e6e" />
          <text x="25" y="37" fill="#fff" className="font-['Open_Sans',sans-serif] text-[34px] font-bold">R</text>
        </svg>
        <Tool label="Type list"><Caret color="#888" /></Tool>
      </div>
      <div className="flex h-[26px] shrink-0 items-center bg-[#f5f5f5]">
        <div className="flex h-full flex-1 items-center border-b border-[#b5b5b5]">
          <select aria-label="Filter" className="flex-1 appearance-none bg-transparent pl-[5px]">
            <option>New &lt;Room Separation&gt;</option>
          </select>
          <Icon w={8} h={6} stroke="#777" sw={2}><path d="M1 1l3 3 3-3" /></Icon>
          <span className="w-[5px]" />
        </div>
        <button type="button" className="flex w-[82px] items-center gap-[5px] pl-1 whitespace-nowrap text-[#b3b3b3]">
          <Icon stroke="#a5a5a5"><path d="M.5 2.500l2-2h4v6h-6zM8.500 .5h6v5h-6zM.5 8.500h6v6h-6z" /><path d="M8.500 6.500h6v9h-6z" fill="#f5f5f5" /><path d="M10 9.500h3M10 12.500h3" /></Icon>
          Edit Type
        </button>
      </div>
      <table className="mt-[5px] w-full table-fixed border-collapse">
        <colgroup>
          <col className="w-[195px]" />
          <col />
          <col className="w-[14px]" />
        </colgroup>
        {properties.map((p) => (
          <tbody key={p.group}>
            <tr className="h-[18px] bg-[#f2f2f2]">
              <th scope="rowgroup" colSpan={2} className="p-0 pl-1 text-left font-normal text-[#222]">{p.group}</th>
              <td className="p-0"><Icon w={8} h={10} stroke="#333"><path d="M1 4l3-3 3 3M1 8l3-3 3 3" strokeWidth="1.500" /></Icon></td>
            </tr>
            <tr className="h-[18px] border-b border-dotted border-[#dcdcdc]">
              <th scope="row" className={`p-0 pl-[9px] text-left font-normal ${p.kind === "active" ? "text-[#333]" : "text-[#9a9a9a]"}`}>
                <label htmlFor={`p-${p.group}`}>{p.name}</label>
              </th>
              <td className="p-0">
                <div className={`flex h-[17px] items-center border pl-[3px] ${p.kind === "active" ? "border-black" : "border-transparent"}`}>
                  {p.kind === "text" ? <output id={`p-${p.group}`} className="text-[#9a9a9a]">Main Model</output> : <Check id={`p-${p.group}`} disabled={p.kind === "check"} />}
                </div>
              </td>
              <td className="p-0" />
            </tr>
          </tbody>
        ))}
      </table>
    </aside>
  );
}

/* ── View area ── */

const PlanIcon = () => <Icon><path d="M.5 .5h7v3h8v11h-9v-3h-6z" fill="#f4f4f4" stroke="#666" /><path d="M7.500 3.500v8M7.500 8.500h4" stroke="#666" strokeDasharray="2 1" /></Icon>;
const SheetIcon = () => <Icon><path d="M.5 2.500h10l5 4v8H.5z" fill="#ececec" stroke="#707070" /><path d="M10.500 2.500v4h5z" fill="#8c8c8c" /></Icon>;
const SectionIcon = () => <Icon stroke="#707070"><circle cx="7" cy="8" r="4.500" /><path d="M7.500 0v3M7.500 13v3M10 4l3 4-3 4" /></Icon>;
const ScheduleIcon = () => <Icon stroke="#707070"><path d="M.5 2.500h14v11H.5z" fill="#e2e2e2" /><path d="M1 4h13" strokeWidth="3" /><path d="M.5 8.500h14M.5 11h14M5 4v9M10 4v9" /></Icon>;

const viewTabs = [
  { label: "L1 - Architectural", icon: <PlanIcon />, width: "w-[142px]" },
  { label: "L1 - Plumbing", icon: <PlanIcon />, width: "w-[128px]" },
  { label: "G000 - Cover", icon: <SheetIcon />, width: "w-[125px]" },
  { label: "L1", icon: <PlanIcon />, width: "w-[128px]", active: true },
  { label: "Transverse Section - Retail/Resident...", icon: <SectionIcon />, width: "w-[248px]" },
  { label: "Room Schedule", icon: <ScheduleIcon />, width: "w-[125px]" },
];

function ViewArea() {
  return (
    <main className="flex min-w-0 flex-1 flex-col border-l-2 border-[#bdbdbd] bg-white">
      <div className="flex h-[21px] shrink-0 items-stretch bg-[#cbcbcb] pl-1">
        {viewTabs.map((t) => (
          <div key={t.label} className={`flex shrink-0 items-center justify-between ${t.width} ${t.active ? "bg-white font-bold" : ""}`}>
            <button type="button" className="flex items-center gap-[6px] pl-[3px] whitespace-nowrap">
              <span className={t.active ? "" : "opacity-60"}>{t.icon}</span>
              {t.label}
            </button>
            {t.active && <Tool label="Close view" className="mr-1"><Icon w={10} h={10} stroke="#666" sw={1.5}><path d="M1 1l8 8M9 1L1 9" /></Icon></Tool>}
          </div>
        ))}
        <Tool label="View list" className="mr-[6px] ml-auto"><Icon w={8} h={7} stroke="none"><path d="M0 0h8v1H0zM0 3h8L4 7z" fill="#777" /></Icon></Tool>
      </div>
      <div className="mt-[1px] flex min-h-0 flex-1">
        <div className="relative ml-[2px] min-w-0 flex-1 overflow-hidden">
          <FloorPlan />
          <NavBar />
        </div>
        <div className="w-[19px] bg-[#e8e8e8]">
          <Tool label="Scroll up" className="h-4 w-full bg-[#f0f0f0]"><Icon w={10} h={6} stroke="#888" sw={2}><path d="M1 5l4-4 4 4" /></Icon></Tool>
        </div>
      </div>
    </main>
  );
}

/* ── Project browser ── */

const plansAbove = ["Floor Plans (Enlarged Plan)"];
const levels = ["Parking", "L1", "L2", "L3", "L4", "L5", "R2", "R3"];
const plansBelow = ["Floor Plans (Life Safety Plan)", "Floor Plans (Schematic Plan)", "Floor Plans (Site Plan)", "Floor Plans (Working)", "Floor Plans (Working Dimensions)", "Ceiling Plans"];

function TreeNode({ label, open = false, children }: { label: string; open?: boolean; children?: ReactNode }) {
  return (
    <li>
      <button type="button" aria-expanded={open} className="flex h-5 items-center whitespace-nowrap">
        <span className="w-2 border-t border-dashed border-[#b0b0b0]" />
        <Icon w={16} h={9} stroke="#666" sw={2}><path d={open ? "M4 4.500h8" : "M4 4.500h8M8 .5v8"} /></Icon>
        <span className="pl-[5px]">{label}</span>
      </button>
      {children}
    </li>
  );
}

function ProjectBrowser() {
  return (
    <aside className="flex w-[316px] shrink-0 flex-col border-l-2 border-[#bdbdbd] bg-white">
      <div className="flex h-[17px] shrink-0 items-center justify-between bg-[#d9d9d9] pl-[3px] whitespace-nowrap">
        <h2 className="text-[11px]">Project Browser - Snowdon Towers Sample Architectur...</h2>
        <Tool label="Close Project Browser"><Icon w={10} h={10} stroke="#666" sw={1.5}><path d="M1 1l8 8M9 1L1 9" /></Icon></Tool>
      </div>
      <label className="mx-[6px] mt-2 ml-[10px] flex h-6 shrink-0 items-center gap-2 border border-[#dcdcdc] pl-2">
        <Icon w={17} h={17} stroke="#777" sw={1.5}><circle cx="7" cy="7" r="5.500" /><path d="M11 11l5 5" strokeWidth="2" /></Icon>
        <input aria-label="Search" placeholder="Search" className="min-w-0 flex-1 bg-transparent outline-none placeholder:text-[#a8ada4]" />
      </label>
      <div className="mt-[9px] flex min-h-0 flex-1">
        <div className="min-w-0 flex-1 overflow-hidden pl-[2px]">
          <button type="button" aria-expanded="true" className="flex h-5 w-full items-center border-y border-[#e6e6e6] bg-[#f2f2f2] pl-[5px]">
            <Icon w={8} h={3} stroke="#666" sw={2}><path d="M0 1.500h8" /></Icon>
            <span className="w-[9px]" />
            <Icon><path d="M1 4V1h3M12 1h3v3M15 12v3h-3M4 15H1v-3" /><path d="M4.500 6.500l2-2h5v5l-2 2h-5z" fill="#c9c9c9" stroke="#666" /></Icon>
            <span className="pl-1">Views (Fe)</span>
          </button>
          <ul className="ml-2 border-l border-dashed border-[#b0b0b0]">
            {plansAbove.map((p) => <TreeNode key={p} label={p} />)}
            <TreeNode label="Floor Plans" open>
              <ul className="ml-[15px]">
                {levels.map((l) => (
                  <li key={l} className="flex h-5 border-l border-dashed border-[#b0b0b0] last:mb-[10px] last:h-[10px]">
                    <button type="button" className={`flex h-5 items-center ${l === "L1" ? "font-bold" : ""}`}>
                      <span className="mr-1 w-6 border-t border-dashed border-[#b0b0b0]" />
                      {l}
                    </button>
                  </li>
                ))}
              </ul>
            </TreeNode>
            {plansBelow.map((p) => <TreeNode key={p} label={p} />)}
          </ul>
        </div>
        <div className="flex w-4 flex-col items-center bg-[#f0f0f0]">
          <Tool label="Scroll up" className="h-[22px]"><Icon w={10} h={6} stroke="#999" sw={2}><path d="M1 5l4-4 4 4" /></Icon></Tool>
          <span className="h-[262px] w-[5px] rounded-full bg-[#cdcdcd]" />
        </div>
      </div>
    </aside>
  );
}

export default function App() {
  return (
    <div className="flex h-screen flex-col overflow-hidden bg-[#d9d9d9] font-['Open_Sans','Noto_Sans',sans-serif] text-[12px] leading-4 text-[#3a3a3a]">
      <TitleBar />
      <TabStrip />
      <Ribbon />
      <QuickAccess />
      <OptionsBar />
      <div className="flex min-h-0 flex-1">
        <PropertiesPalette />
        <ViewArea />
        <ProjectBrowser />
      </div>
    </div>
  );
}
